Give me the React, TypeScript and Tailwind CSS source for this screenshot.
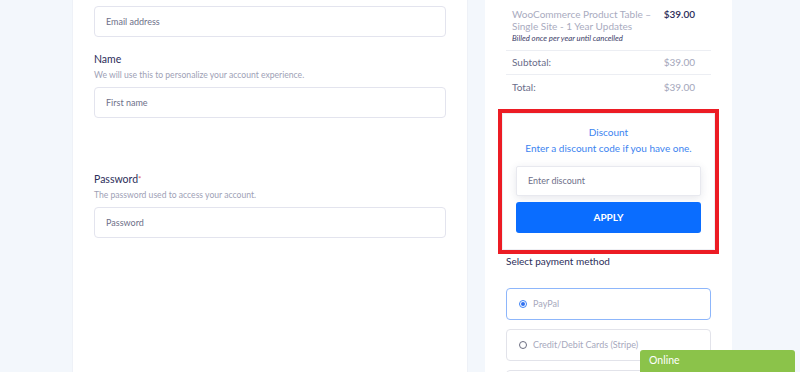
const font = { fontFamily: "Lato, 'Noto Sans', sans-serif" };

function TextInput({ placeholder }: { placeholder: string }) {
  return (
    <div className="h-[31px] w-full rounded-[4px] border border-[#e3e4ee] bg-white flex items-center px-[11px] text-[9px] text-[#6e7089]">
      {placeholder}
    </div>
  );
}

function Field({
  label,
  help,
  placeholder,
  required,
}: {
  label: string;
  help: string;
  placeholder: string;
  required?: boolean;
}) {
  return (
    <div>
      <div className="text-[10.5px] leading-[14px] text-[#2c2e5a]">
        {label}
        {required && <span className="text-[#e25c5c] text-[8px] align-top">*</span>}
      </div>
      <div className="mt-[3px] text-[8.6px] leading-[12px] text-[#9ea1b6]">{help}</div>
      <div className="mt-[6px]">
        <TextInput placeholder={placeholder} />
      </div>
    </div>
  );
}

function Radio({ checked }: { checked?: boolean }) {
  return checked ? (
    <span className="w-[8px] h-[8px] rounded-full border border-[#3b82f6] flex items-center justify-center">
      <span className="w-[4px] h-[4px] rounded-full bg-[#2f6ff0]" />
    </span>
  ) : (
    <span className="w-[8px] h-[8px] rounded-full border border-[#6b6d80]" />
  );
}

function PayOption({ label, checked }: { label: string; checked?: boolean }) {
  return (
    <div
      className={
        "h-[32px] rounded-[4px] border bg-white flex items-center gap-[6px] px-[12px] text-[9px] text-[#a7a9bd] " +
        (checked ? "border-[#8db6fb]" : "border-[#e2e3ea]")
      }
    >
      <Radio checked={checked} />
      {label}
    </div>
  );
}

export default function App() {
  return (
    <div className="relative h-[372px] w-[800px] overflow-hidden bg-[#f3f7fc] flex items-start gap-[17px] pl-[72px]" style={font}>
      <section className="w-[396px] h-[372px] bg-white border-x border-[#eef1f7] px-[21px] pt-[6px]">
        <TextInput placeholder="Email address" />
        <div className="mt-[15px]">
          <Field
            label="Name"
            help="We will use this to personalize your account experience."
            placeholder="First name"
          />
        </div>
        <div className="mt-[54px]">
          <Field
            label="Password"
            required
            help="The password used to access your account."
            placeholder="Password"
          />
        </div>
      </section>

      <section className="w-[247px] h-[372px] bg-white px-[21px] pt-[8px]">
        <div className="flex justify-between pl-[6px] pr-[16px] pb-[6px] border-b border-[#eceef3]">
          <div>
            <div className="text-[10px] leading-[12px] text-[#a9abc0] w-[145px]">
              WooCommerce Product Table – Single Site - 1 Year Updates
            </div>
            <div className="text-[7.8px] leading-[12px] italic text-[#3d4068]">
              Billed once per year until cancelled
            </div>
          </div>
          <div className="text-[10px] leading-[12px] text-[#2c2e5a] font-semibold">$39.00</div>
        </div>
        <div className="h-[24px] flex items-center justify-between pl-[6px] pr-[16px] border-b border-[#eceef3] text-[10px]">
          <span className="text-[#6a6d8a]">Subtotal:</span>
          <span className="text-[#a3a6bb]">$39.00</span>
        </div>
        <div className="h-[25px] flex items-center justify-between pl-[6px] pr-[16px] text-[10px]">
          <span className="text-[#6a6d8a]">Total:</span>
          <span className="text-[#a3a6bb]">$39.00</span>
        </div>

        <div className="mt-[9px] -mx-[8px] border-[4px] border-[#ec1c24]">
          <div className="border border-[#eeeff3] px-[13px] pt-[11px] pb-[16px] text-center">
            <div className="text-[10px] leading-[14px] text-[#3c84f0]">Discount</div>
            <div className="mt-[2px] text-[10px] leading-[14px] text-[#3c84f0]">
              Enter a discount code if you have one.
            </div>
            <div className="mt-[11px] h-[30px] rounded-[2px] border border-[#e8e9ef] bg-white shadow-[0_2px_8px_rgba(40,50,90,0.12)] flex items-center px-[11px] text-[9px] text-[#6e7089]">
              Enter discount
            </div>
            <button className="mt-[6px] w-full h-[31px] rounded-[3px] bg-[#0a6dff] text-white text-[10px] font-bold">
              APPLY
            </button>
          </div>
        </div>

        <div className="mt-0 text-[10px] leading-[14px] text-[#2c2e5a]">Select payment method</div>
        <div className="mt-[20px] flex flex-col gap-[9px]">
          <PayOption label="PayPal" checked />
          <PayOption label="Credit/Debit Cards (Stripe)" />
          <PayOption label="" />
        </div>
      </section>

      <div className="absolute bottom-0 right-[5px] w-[155px] h-[22px] rounded-t-[3px] bg-[#8bc34a] text-white text-[10.5px] flex items-center px-[9px]">
        Online
      </div>
    </div>
  );
}
